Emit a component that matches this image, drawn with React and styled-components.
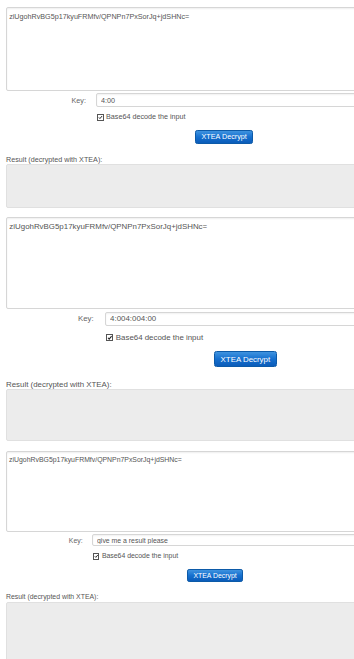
import React from 'react'
import styled, { createGlobalStyle } from 'styled-components'

const GlobalStyle = createGlobalStyle`
    html, body {
        margin: 0;
        padding: 0;
        background: #fff;
        overflow: hidden;
    }
    body {
        font-family: "Liberation Sans", Arial, sans-serif;
    }
`

const CIPHER = 'ziUgohRvBG5p17kyuFRMfv/QPNPn7PxSorJq+jdSHNc='

const panels = [
    { size: 7.2, keyValue: '4:00', box: 6.1 },
    { size: 7.9, keyValue: '4:004:004:00', box: 6.6 },
    { size: 6.9, keyValue: 'give me a result please', box: 9 },
]

function Panel({ size, keyValue, box }) {
    return (
        <Form $size={size}>
            <Cipher readOnly value={CIPHER} />
            <KeyRow>
                <KeyLabel>Key:</KeyLabel>
                <KeyInput readOnly value={keyValue} />
            </KeyRow>
            <CheckRow>
                <Check>
                    <svg viewBox="0 0 10 10">
                        <path d="M1.8 5 L4 7.4 L8.4 2.2" fill="none" stroke="#222" strokeWidth="2" />
                    </svg>
                </Check>
                <span>Base64 decode the input</span>
            </CheckRow>
            <Button type="button">XTEA Decrypt</Button>
            <ResultLabel>Result (decrypted with XTEA):</ResultLabel>
            <ResultBox $h={box} />
        </Form>
    )
}

function App() {
    return (
        <Page>
            <GlobalStyle />
            {panels.map((p, i) => (
                <Panel key={i} {...p} />
            ))}
        </Page>
    )
}

const Page = styled.div`
    padding: 7px 0 0 6px;
    width: 348px;
`

const Form = styled.form`
    font-size: ${p => p.$size}px;
    color: #555;
    display: flex;
    flex-direction: column;
    margin: 0 0 1.2em 0;
`

const Cipher = styled.textarea`
    display: block;
    box-sizing: border-box;
    width: calc(100% + 12px);
    height: 11.7em;
    margin: 0;
    padding: 0.55em 0.3em;
    border: 1px solid #d6d6d6;
    border-radius: 2px;
    box-shadow: inset 0 1px 2px rgba(0, 0, 0, 0.07);
    font-family: "Liberation Sans", Arial, sans-serif;
    font-size: 1em;
    line-height: 1.3;
    color: #555;
    resize: none;
    outline: none;
`

const KeyRow = styled.div`
    display: flex;
    align-items: center;
    margin-top: 0.3em;
`

const KeyLabel = styled.label`
    width: 12.5em;
    box-sizing: border-box;
    padding-right: 1.4em;
    text-align: right;
    color: #666;
`

const KeyInput = styled.input`
    flex: 1;
    box-sizing: border-box;
    height: 1.85em;
    margin: 0 -12px 0 0;
    padding: 0 0.55em;
    border: 1px solid #d6d6d6;
    border-radius: 2px;
    box-shadow: inset 0 1px 2px rgba(0, 0, 0, 0.06);
    font-family: "Liberation Sans", Arial, sans-serif;
    font-size: 1em;
    color: #555;
    outline: none;
`

const CheckRow = styled.div`
    display: flex;
    align-items: center;
    gap: 0.35em;
    margin: 0.85em 0 0 12.6em;
    line-height: 1.2em;
    color: #555;
`

const Check = styled.span`
    display: flex;
    box-sizing: border-box;
    width: 0.95em;
    height: 0.95em;
    border: 1px solid #555;
    background: #fff;

    svg {
        display: block;
        width: 100%;
        height: 100%;
    }
`

const Button = styled.button`
    align-self: flex-start;
    box-sizing: border-box;
    width: 8em;
    height: 2em;
    margin: 1.15em 0 0 26.3em;
    padding: 0;
    border: 1px solid #0c5aa8;
    border-radius: 0.3em;
    background: linear-gradient(to bottom, #3f93df 0%, #1670cf 50%, #0b5cb9 100%);
    color: #fff;
    font-family: "Liberation Sans", Arial, sans-serif;
    font-size: 1em;
`

const ResultLabel = styled.div`
    margin-top: 1.6em;
    line-height: 1.2em;
    color: #555;
`

const ResultBox = styled.div`
    box-sizing: border-box;
    width: calc(100% + 12px);
    height: ${p => p.$h}em;
    background: #ececec;
    border: 1px solid #e0e0e0;
    border-radius: 2px;
`

export default App
